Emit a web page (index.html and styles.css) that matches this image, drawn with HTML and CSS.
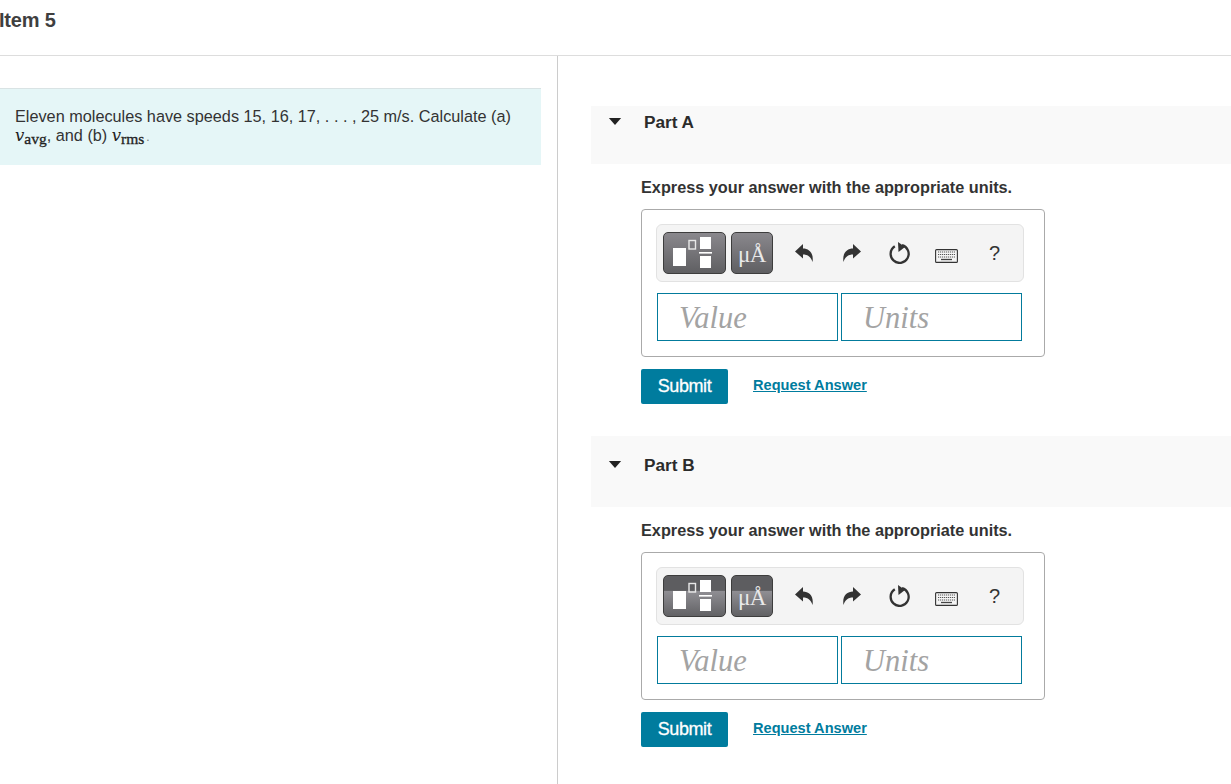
FILE: index.html
```html
<!DOCTYPE html>
<html lang="en">
<head>
<meta charset="utf-8">
<title>Item 5</title>
<link rel="stylesheet" href="styles.css">
</head>
<body>
<header class="top"><h1 class="item-title">Item 5</h1></header>
<main class="columns">
  <section class="left">
    <div class="problem">
      <p>Eleven molecules have speeds 15, 16, 17, . . . , 25 m/s. Calculate (a)<br><span class="m"><i>v</i><sub>avg</sub></span>, and (b) <span class="m"><i>v</i><sub>rms</sub></span><span class="dot">.</span></p>
    </div>
  </section>
  <section class="right">
    <div class="part part-a">
      <div class="part-head head-a"><svg class="caret" viewBox="0 0 14 8"><path d="M0 0h14L7 8z"/></svg><span>Part A</span></div>
      <div class="part-body">
        <p class="instr">Express your answer with the appropriate units.</p>
        <div class="answer">
          <div class="toolbar">
            <div class="tbtn tbtn-wide"><svg viewBox="0 0 61 40" width="61" height="40"><rect x="9" y="15" width="13" height="18" fill="#fff"/><rect x="25" y="7.500" width="6.500" height="8.500" fill="none" stroke="#e8e8e8" stroke-width="1.400"/><rect x="36" y="4" width="11" height="12" fill="#fff"/><rect x="35" y="19" width="13" height="1.600" fill="#fff"/><rect x="36" y="23" width="11" height="12" fill="#fff"/></svg></div>
            <div class="tbtn tbtn-mu"><span class="mu">μÅ</span></div>
            <div class="icons">
              <svg class="ic ic-undo" viewBox="0 0 18 18"><path d="M0 7.500 8 0V4.500C14 4.500 19 9 17.500 18 16 13 13 10.500 8 10.500V14.500z"/></svg>
              <svg class="ic ic-redo" viewBox="0 0 18 18"><path d="M18 7.500 10 0V4.500C4 4.500-1 9 .5 18 2 13 5 10.500 10 10.500V14.500z"/></svg>
              <svg class="ic ic-reset" viewBox="0 0 21 22"><path d="M13 3.200A9 9 0 1 1 5.800 4.300" fill="none" stroke="#333" stroke-width="2.300"/><path d="M9 0 16 5 9.500 10z"/></svg>
              <svg class="ic ic-kbd" viewBox="0 0 23 14"><rect x=".6" y=".6" width="21.800" height="12.800" rx="1" fill="#f4f4f4" stroke="#333" stroke-width="1.100"/><path d="M3 3h17M3 5.500h17M3 8h17" stroke="#555" stroke-width="1.200" stroke-dasharray="1.200 .8" fill="none"/><path d="M6 10.500h11" stroke="#444" stroke-width="1.300"/></svg>
              <span class="help">?</span>
            </div>
          </div>
          <div class="fields">
            <div class="field">Value</div>
            <div class="field">Units</div>
          </div>
        </div>
        <div class="actions"><button class="submit">Submit</button><a class="req" href="#">Request Answer</a></div>
      </div>
    </div>
    <div class="part part-b">
      <div class="part-head head-b"><svg class="caret" viewBox="0 0 14 8"><path d="M0 0h14L7 8z"/></svg><span>Part B</span></div>
      <div class="part-body">
        <p class="instr">Express your answer with the appropriate units.</p>
        <div class="answer">
          <div class="toolbar">
            <div class="tbtn tbtn-wide banded"><svg viewBox="0 0 61 40" width="61" height="40"><rect x="9" y="15" width="13" height="18" fill="#fff"/><rect x="25" y="7.500" width="6.500" height="8.500" fill="none" stroke="#e8e8e8" stroke-width="1.400"/><rect x="36" y="4" width="11" height="12" fill="#fff"/><rect x="35" y="19" width="13" height="1.600" fill="#fff"/><rect x="36" y="23" width="11" height="12" fill="#fff"/></svg></div>
            <div class="tbtn tbtn-mu banded"><span class="mu">μÅ</span></div>
            <div class="icons">
              <svg class="ic ic-undo" viewBox="0 0 18 18"><path d="M0 7.500 8 0V4.500C14 4.500 19 9 17.500 18 16 13 13 10.500 8 10.500V14.500z"/></svg>
              <svg class="ic ic-redo" viewBox="0 0 18 18"><path d="M18 7.500 10 0V4.500C4 4.500-1 9 .5 18 2 13 5 10.500 10 10.500V14.500z"/></svg>
              <svg class="ic ic-reset" viewBox="0 0 21 22"><path d="M13 3.200A9 9 0 1 1 5.800 4.300" fill="none" stroke="#333" stroke-width="2.300"/><path d="M9 0 16 5 9.500 10z"/></svg>
              <svg class="ic ic-kbd" viewBox="0 0 23 14"><rect x=".6" y=".6" width="21.800" height="12.800" rx="1" fill="#f4f4f4" stroke="#333" stroke-width="1.100"/><path d="M3 3h17M3 5.500h17M3 8h17" stroke="#555" stroke-width="1.200" stroke-dasharray="1.200 .8" fill="none"/><path d="M6 10.500h11" stroke="#444" stroke-width="1.300"/></svg>
              <span class="help">?</span>
            </div>
          </div>
          <div class="fields">
            <div class="field">Value</div>
            <div class="field">Units</div>
          </div>
        </div>
        <div class="actions"><button class="submit">Submit</button><a class="req" href="#">Request Answer</a></div>
      </div>
    </div>
  </section>
</main>
</body>
</html>
```
FILE: styles.css
```css
* { box-sizing: border-box; }
html, body { margin: 0; height: 100%; overflow: hidden; }
body { width: 1231px; height: 784px; background: #fff; font-family: "Liberation Sans", Arial, sans-serif; color: #333; }
.top { height: 56px; border-bottom: 1px solid #ddd; padding-top: 9px; }
.item-title { margin: 0 0 0 -1px; font-size: 20px; line-height: 23px; font-weight: 700; color: #3f3f3f; letter-spacing: -.2px; }
.columns { display: flex; height: 728px; }
.left { width: 558px; border-right: 1px solid #ccc; padding-top: 32px; }
.problem { width: 541px; height: 77px; background: #e5f6f7; border-top: 1px solid #d9e3e4; padding: 18px 15px 0; }
.problem p { margin: 0; font-size: 16.250px; line-height: 19px; color: #333; }
.m { font-family: "DejaVu Serif", serif; color: #222; line-height: 0; }
.m i { font-size: 16.500px; }
.m sub { font-family: "Liberation Serif", serif; font-size: 15.500px; font-weight: 400; -webkit-text-stroke: .3px #222; line-height: 0; vertical-align: -3px; }
.dot { color: #777; font-size: 12px; margin-left: 2px; }
.right { flex: 1; padding: 50px 0 0 33px; }
.part-head { display: flex; align-items: flex-start; background: #f9f9f9; font-size: 17.200px; font-weight: 700; line-height: 20px; color: #2b2b2b; padding: 6px 0 0 17px; }
.head-a { height: 58px; }
.head-b { height: 71px; padding-top: 19px; }
.caret { width: 14px; height: 7px; margin-top: 6px; margin-right: 22px; fill: #222; flex: none; }
.part-body { padding: 13px 0 0 50px; }
.instr { margin: 0; font-size: 16.250px; line-height: 20px; font-weight: 700; color: #333; }
.answer { width: 404px; height: 148px; margin-top: 12px; border: 1px solid #aaa; border-radius: 4px; padding: 14px 14px 0; }
.toolbar { width: 368px; height: 58px; background: #f4f4f4; border: 1px solid #e2e2e2; border-radius: 6px; padding: 7px 0 0 6px; display: flex; align-items: flex-start; gap: 5px; }
.tbtn { height: 42px; border: 1px solid #3d3d3d; border-radius: 5px; background: linear-gradient(#8a888d, #5f5f62); display: flex; align-items: center; justify-content: center; overflow: hidden; }
.tbtn.banded { background: linear-gradient(#5d5d60 0, #5d5d60 36%, #8f8e93 38%, #626265 100%); }
.tbtn-wide { width: 63px; }
.tbtn-mu { width: 42px; }
.mu { font-family: "Liberation Serif", serif; font-size: 23px; color: #e9e9e9; padding-top: 2px; line-height: 1; white-space: nowrap; letter-spacing: -.5px; }
.icons { flex: 1; display: flex; align-items: center; height: 42px; }
.ic { display: block; flex: none; fill: #333; }
.ic-undo { width: 18px; height: 18px; margin-left: 17px; }
.ic-redo { width: 18px; height: 18px; margin-left: 30px; }
.ic-reset { width: 21px; height: 22px; margin-left: 28px; }
.ic-kbd { width: 23px; height: 14px; margin-left: 25px; margin-top: 6px; }
.help { margin-left: 31px; font-size: 20px; color: #333; line-height: 1; }
.fields { display: flex; gap: 3px; margin-top: 11px; padding-left: 1px; }
.field { width: 181px; height: 48px; border: 1px solid #037b9c; padding: 7px 0 0 21px; font-family: "Liberation Serif", serif; font-style: italic; font-size: 30.500px; line-height: 34px; color: #a3a3a3; }
.actions { display: flex; align-items: center; margin-top: 12px; height: 35px; }
.submit { width: 87px; height: 35px; border: 0; border-radius: 2px; background: #007c9e; color: #fff; font-family: "Liberation Sans", Arial, sans-serif; font-size: 18px; font-weight: 400; letter-spacing: -.4px; padding: 0; -webkit-text-stroke: .3px #fff; }
.req { margin-left: 25px; margin-top: -4px; font-size: 14.600px; font-weight: 700; color: #007c9e; text-decoration: underline; }
.part-a { height: 330px; }
```
